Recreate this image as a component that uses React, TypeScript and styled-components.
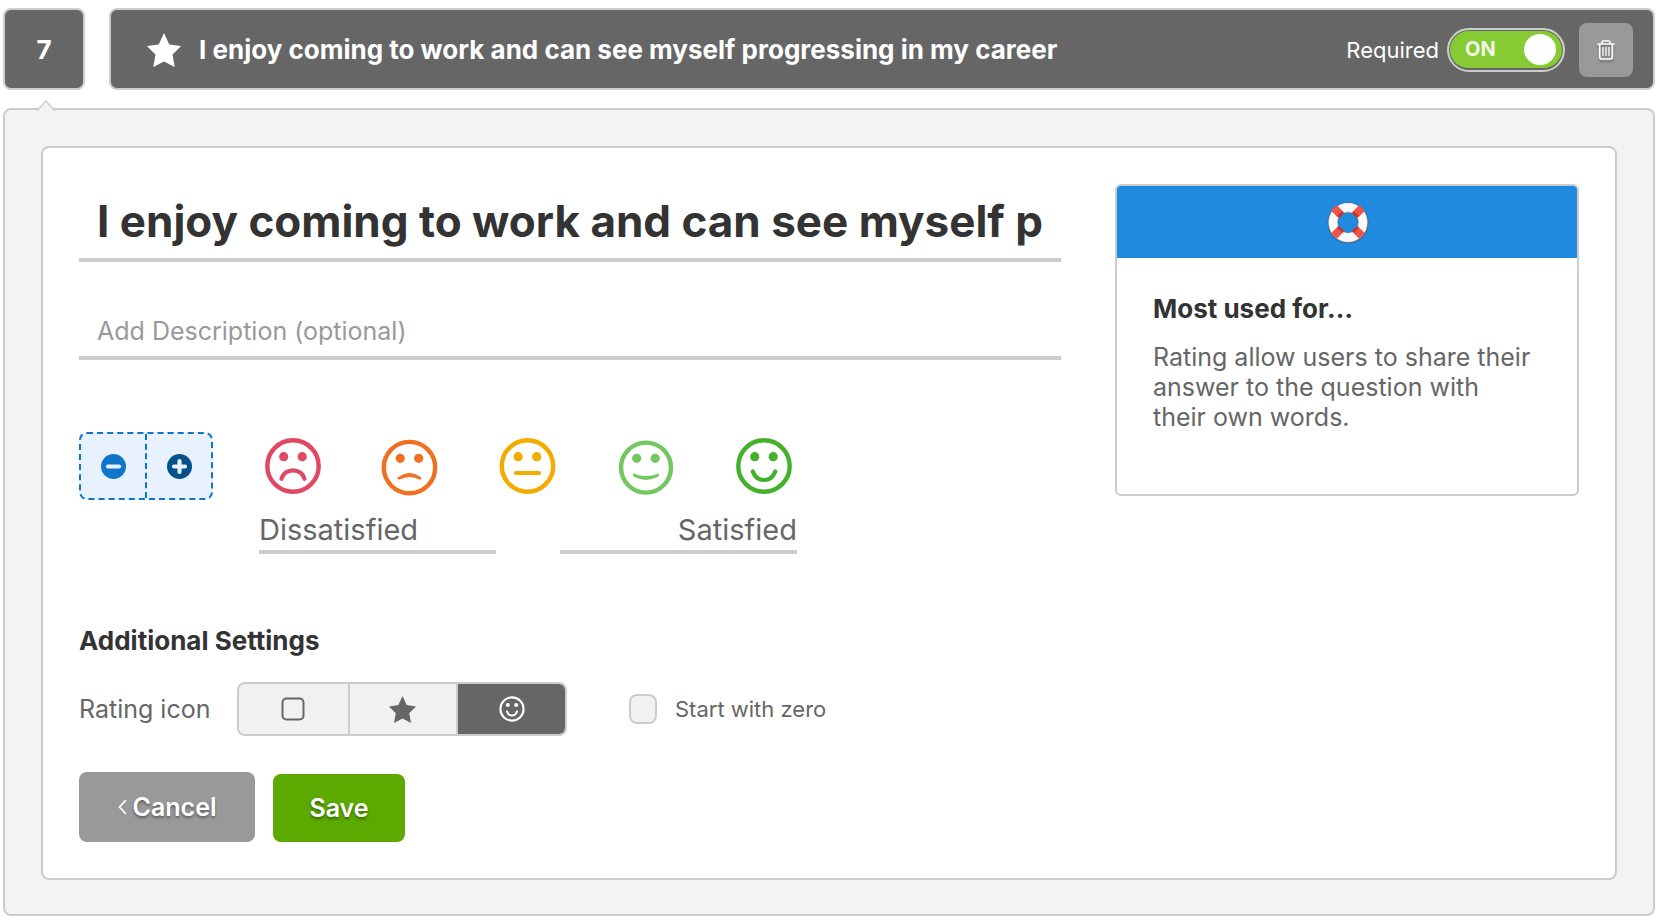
import React, { useState } from 'react';
import styled, { createGlobalStyle, css } from 'styled-components';

const GlobalStyle = createGlobalStyle`
  *, *::before, *::after { box-sizing: border-box; }
  body {
    margin: 0;
    background: #fff;
    color: #666;
    font-family: Inter, "Liberation Sans", sans-serif;
    font-size: 25px;
    line-height: 30px;
  }
  button, input { font-family: inherit; margin: 0; }
`;

const Page = styled.main`
  padding: 8px 3px 4px;
`;

const QuestionHeader = styled.header`
  display: flex;
  gap: 24px;
  margin-bottom: 18px;
`;

const darkBox = css`
  display: flex;
  align-items: center;
  height: 82px;
  padding-top: 2px;
  border: 2px solid #ccc;
  border-radius: 8px;
  background: #666;
  color: #fff;
  font-size: 26px;
  font-weight: 700;
`;

const NumberBox = styled.div`
  ${darkBox}
  flex: 0 0 82px;
  justify-content: center;
`;

const TitleBar = styled.div`
  ${darkBox}
  flex: 1;
  min-width: 0;
  padding-left: 36px;
  padding-right: 20px;
`;

const BarTitle = styled.h1`
  flex: 1;
  min-width: 0;
  margin: 0 0 0 18px;
  font-size: 26px;
  line-height: 30px;
  font-weight: 700;
  white-space: nowrap;
  overflow: hidden;
  text-overflow: ellipsis;
`;

const RequiredLabel = styled.label`
  display: flex;
  align-items: center;
  gap: 8px;
  margin-right: 14px;
  font-size: 22px;
  font-weight: 400;
`;

const Switch = styled.span`
  position: relative;
  display: flex;
  align-items: center;
  justify-content: space-between;
  width: 118px;
  height: 44px;
  padding: 0 7px 2px 16px;
  border: 2px solid #ccc;
  border-radius: 22px;
  background: #86cb34;
  box-shadow: inset 0 0 0 1px #666, inset 0 -2px 0 #666;
  color: #f1fae6;
  font-size: 20px;
  font-weight: 700;
`;

const SwitchInput = styled.input`
  position: absolute;
  inset: 0;
  width: 100%;
  height: 100%;
  opacity: 0;
`;

const Knob = styled.span`
  width: 32px;
  height: 31px;
  border-radius: 50%;
  background: #fff;
`;

const TrashButton = styled.button`
  display: flex;
  align-items: center;
  justify-content: center;
  width: 54px;
  height: 54px;
  padding: 0;
  border: 0;
  border-radius: 8px;
  background: #999;
  color: #fff;
  svg { filter: drop-shadow(0 2px 1px rgba(0, 0, 0, 0.3)); }
`;

const Panel = styled.section`
  position: relative;
  padding: 36px 36px 34px;
  border: 2px solid #ccc;
  border-radius: 8px;
  background: #f3f3f3;
`;

const Pointer = styled.svg`
  position: absolute;
  top: -10px;
  left: 31px;
`;

const Card = styled.form`
  display: grid;
  grid-template-columns: minmax(0, 1fr) 464px;
  column-gap: 54px;
  align-items: start;
  padding: 36px;
  border: 2px solid #ccc;
  border-radius: 8px;
  background: #fff;
`;

const Fields = styled.div`
  display: flex;
  flex-direction: column;
`;

const lineInput = css`
  display: block;
  width: 100%;
  border: 0;
  border-bottom: 4px solid #ccc;
  border-radius: 0;
  background: transparent;
  outline: 0;
`;

const TitleInput = styled.input`
  ${lineInput}
  height: 78px;
  padding: 0 18px;
  color: #333;
  font-size: 44px;
  font-weight: 700;
`;

const DescriptionInput = styled.input`
  ${lineInput}
  height: 60px;
  margin-top: 38px;
  padding: 6px 18px 0;
  color: #666;
  font-size: 25px;
  &::placeholder { color: #999; opacity: 1; }
`;

const RatingRow = styled.div`
  display: flex;
  align-items: flex-start;
  gap: 46px;
  margin-top: 72px;
`;

const Stepper = styled.div`
  display: flex;
  width: 134px;
  height: 68px;
  border: 2px dashed #0f75c9;
  border-radius: 8px;
  background: #e8f2ff;
`;

const StepButton = styled.button`
  display: flex;
  flex: 1;
  align-items: center;
  justify-content: center;
  padding: 0;
  border: 0;
  background: transparent;
  & + & { border-left: 2px dashed #0f75c9; }
`;

const Scale = styled.div`
  width: 538px;
`;

const Faces = styled.div`
  display: flex;
  justify-content: space-between;
  padding: 6px 5px 0 6px;
`;

const ScaleLabels = styled.div`
  display: flex;
  justify-content: space-between;
  gap: 64px;
  margin-top: 12px;
`;

const ScaleInput = styled.input<{ $align: 'left' | 'right' }>`
  ${lineInput}
  flex: 1;
  min-width: 0;
  height: 46px;
  padding: 0;
  color: #666;
  font-size: 29px;
  text-align: ${(p) => p.$align};
`;

const SectionTitle = styled.h2`
  margin: 0;
  color: #333;
  font-size: 26px;
  line-height: 30px;
  font-weight: 700;
`;

const SettingsTitle = styled(SectionTitle)`
  margin-top: 72px;
`;

const SettingsRow = styled.div`
  display: flex;
  align-items: center;
  margin-top: 26px;
`;

const SettingName = styled.span`
  width: 158px;
`;

const Segments = styled.div`
  display: grid;
  grid-template-columns: repeat(3, 1fr);
  width: 330px;
  height: 54px;
  overflow: hidden;
  border: 2px solid #ccc;
  border-radius: 8px;
  background: #f1f1f1;
`;

const Segment = styled.button<{ $active: boolean }>`
  display: flex;
  align-items: center;
  justify-content: center;
  padding: 0;
  border: 0;
  background: ${(p) => (p.$active ? '#666' : '#f1f1f1')};
  color: ${(p) => (p.$active ? '#fff' : '#666')};
  & + & { border-left: 2px solid #ccc; }
`;

const CheckLabel = styled.label`
  display: flex;
  align-items: center;
  gap: 18px;
  margin-left: 62px;
  font-size: 22px;
`;

const CheckBox = styled.input`
  appearance: none;
  width: 28px;
  height: 30px;
  border: 2px solid #ccc;
  border-radius: 8px;
  background: #f1f1f1;
  &:checked { background: #666; }
`;

const Actions = styled.div`
  display: flex;
  align-items: flex-end;
  gap: 18px;
  margin-top: 36px;
`;

const ActionButton = styled.button<{ $primary?: boolean }>`
  display: flex;
  align-items: center;
  justify-content: center;
  gap: 6px;
  width: ${(p) => (p.$primary ? 132 : 176)}px;
  height: ${(p) => (p.$primary ? 68 : 70)}px;
  padding: 0;
  border: 0;
  border-radius: 8px;
  background: ${(p) => (p.$primary ? '#5caa00' : '#999')};
  color: #fff;
  font-size: 25px;
  font-weight: 600;
  text-shadow: 0 2px 3px rgba(0, 0, 0, 0.4);
`;

const HelpBox = styled.aside`
  min-height: 312px;
  overflow: hidden;
  border: 2px solid #ccc;
  border-radius: 6px;
`;

const HelpBanner = styled.div`
  display: flex;
  align-items: center;
  justify-content: center;
  height: 72px;
  padding: 2px 0 0 2px;
  background: #208ade;
`;

const HelpBody = styled.div`
  padding: 36px 40px 36px 36px;
`;

const HelpText = styled.p`
  margin: 18px 0 0;
`;

const starPath =
  'M50 0 L65.5 33.5 L100 38.5 L75 63.5 L81.5 100 L50 83.5 L18.5 100 L25 63.5 L0 38.5 L34.5 33.5 Z';

const Star = ({ size }: { size: number }) => (
  <svg width={size} height={size} viewBox="0 0 100 100" fill="currentColor" aria-hidden="true">
    <path d={starPath} />
  </svg>
);

const Trash = () => (
  <svg width="18" height="20" viewBox="0 0 18 20" fill="none" stroke="currentColor" strokeWidth="1.7" strokeLinecap="round" aria-hidden="true">
    <path d="M1 4H17M5 4V2.6Q5 1 6.6 1H11.4Q13 1 13 2.6V4M2.7 4V17Q2.7 19 4.7 19H13.3Q15.3 19 15.3 17V4" />
    <path d="M6 7.5V15.5M9 7.5V15.5M12 7.5V15.5" strokeWidth="1.3" />
  </svg>
);

const mouths = [
  'M16.5 40.8C18 35.5 22.5 32.3 28 32.3S38 35.5 39.5 40.8',
  'M16.5 38.2Q28 29.5 39.5 38.2Q40 39.8 38 39.5Q28 34.5 18 39.5Q16 39.8 16.5 38.2Z',
  'M16.5 35H39.5',
  'M15.5 34.5Q28 39.5 40.5 34.5Q41 36 39.5 37Q28 42.5 16.5 37Q15 36 15.5 34.5Z',
  'M16.8 33.5C19 39.5 23 42 28 42S37 39.5 39.2 33.5',
];
const shifts = ['0 0', '-1.5 1.6', '-1.5 0', '0 1.6', '0 0'];
const faceColors = ['#e04864', '#f16f21', '#f4ab00', '#73c760', '#43b12a'];
const faceNames = ['Very dissatisfied', 'Dissatisfied', 'Neutral', 'Satisfied', 'Very satisfied'];

const Face = ({ level }: { level: number }) => {
  const color = faceColors[level];
  const thin = level === 1 || level === 3;
  return (
    <svg width="56" height="58" viewBox="0 0 56 58" overflow="visible" role="img" aria-label={faceNames[level]}>
      <g transform={`translate(${shifts[level]})`} fill="none" stroke={color}>
        <circle cx="28" cy="28" r={level === 3 ? 25 : 25.7} strokeWidth="4.4" />
        <circle cx="18.7" cy="18.7" r="4.6" fill={color} stroke="none" />
        <circle cx="37.2" cy="18.7" r="4.6" fill={color} stroke="none" />
        <path
          d={mouths[level]}
          strokeWidth={thin ? 1 : 4.2}
          fill={thin ? color : 'none'}
          strokeLinecap="round"
          strokeLinejoin="round"
        />
      </g>
    </svg>
  );
};

const StepIcon = ({ plus }: { plus?: boolean }) => (
  <svg width="25" height="25" viewBox="0 0 25 25" aria-hidden="true">
    <circle cx="12.5" cy="12.5" r="12.5" fill={plus ? '#05518c' : '#0f75c9'} />
    <path
      d={plus ? 'M7 12.5H18M12.5 7V18' : 'M7 12.5H18'}
      stroke="#e8f2ff"
      strokeWidth="4.2"
      strokeLinecap="round"
    />
  </svg>
);

const SquareIcon = () => (
  <svg width="24" height="24" viewBox="0 0 24 24" fill="none" stroke="currentColor" strokeWidth="2" aria-hidden="true">
    <rect x="1.5" y="1.5" width="21" height="21" rx="4" />
  </svg>
);

const SmileIcon = () => (
  <svg width="26" height="26" viewBox="0 0 26 26" fill="none" stroke="currentColor" strokeWidth="2.1" strokeLinecap="round" aria-hidden="true">
    <circle cx="13" cy="13" r="11.6" />
    <circle cx="8.8" cy="9" r="2" fill="currentColor" stroke="none" />
    <circle cx="17.2" cy="9" r="2" fill="currentColor" stroke="none" />
    <path d="M8 15.5C9 18.5 11 19.5 13 19.5S17 18.5 18 15.5" />
  </svg>
);

const LifeRing = () => (
  <svg width="42" height="44" viewBox="0 0 42 44" fill="none" aria-hidden="true">
    <circle cx="21" cy="22" r="15.3" stroke="#46668c" strokeWidth="10.6" />
    <circle cx="21" cy="21.6" r="15" stroke="#d5d8dd" strokeWidth="9.2" />
    <circle cx="21" cy="21.2" r="15" stroke="#fafafa" strokeWidth="8" />
    <g stroke="#ee564c" strokeWidth="8">
      <path d="M14 14L6.8 6.8M28 14L35.2 6.8M14 28L6.8 35.2M28 28L35.2 35.2" />
    </g>
    <g stroke="#c93336" strokeWidth="7">
      <path d="M14.6 14.6L12.6 12.6M27.4 14.6L29.4 12.6M14.6 27.4L12.6 29.4M27.4 27.4L29.4 29.4" />
    </g>
  </svg>
);

const Chevron = () => (
  <svg width="9" height="16" viewBox="0 0 9 16" fill="none" stroke="currentColor" strokeWidth="1.8" aria-hidden="true">
    <path d="M8 1L1.5 8L8 15" />
  </svg>
);

const question = 'I enjoy coming to work and can see myself progressing in my career';

const ratingIcons = [
  { name: 'Square', icon: <SquareIcon /> },
  { name: 'Star', icon: <Star size={27} /> },
  { name: 'Smiley', icon: <SmileIcon /> },
];

export default function App() {
  const [title, setTitle] = useState(question);
  const [icon, setIcon] = useState('Smiley');

  return (
    <>
      <GlobalStyle />
      <Page>
        <QuestionHeader>
          <NumberBox>7</NumberBox>
          <TitleBar>
            <Star size={34} />
            <BarTitle>{title}</BarTitle>
            <RequiredLabel>
              Required
              <Switch>
                <SwitchInput type="checkbox" role="switch" defaultChecked />
                ON
                <Knob />
              </Switch>
            </RequiredLabel>
            <TrashButton type="button" aria-label="Delete question">
              <Trash />
            </TrashButton>
          </TitleBar>
        </QuestionHeader>

        <Panel>
          <Pointer width="20" height="11" viewBox="0 0 20 11" aria-hidden="true">
            <path d="M1 11L10 1L19 11" fill="#f3f3f3" stroke="#ccc" strokeWidth="1.4" />
          </Pointer>
          <Card onSubmit={(e) => e.preventDefault()}>
            <Fields>
              <TitleInput aria-label="Question" value={title} onChange={(e) => setTitle(e.target.value)} />
              <DescriptionInput aria-label="Description" placeholder="Add Description (optional)" />

              <RatingRow>
                <Stepper>
                  <StepButton type="button" aria-label="Fewer options">
                    <StepIcon />
                  </StepButton>
                  <StepButton type="button" aria-label="More options">
                    <StepIcon plus />
                  </StepButton>
                </Stepper>
                <Scale>
                  <Faces>
                    {faceNames.map((name, level) => (
                      <Face key={name} level={level} />
                    ))}
                  </Faces>
                  <ScaleLabels>
                    <ScaleInput $align="left" aria-label="Lowest label" defaultValue="Dissatisfied" />
                    <ScaleInput $align="right" aria-label="Highest label" defaultValue="Satisfied" />
                  </ScaleLabels>
                </Scale>
              </RatingRow>

              <SettingsTitle>Additional Settings</SettingsTitle>
              <SettingsRow>
                <SettingName id="rating-icon">Rating icon</SettingName>
                <Segments role="group" aria-labelledby="rating-icon">
                  {ratingIcons.map((item) => (
                    <Segment
                      key={item.name}
                      type="button"
                      aria-label={item.name}
                      aria-pressed={icon === item.name}
                      $active={icon === item.name}
                      onClick={() => setIcon(item.name)}
                    >
                      {item.icon}
                    </Segment>
                  ))}
                </Segments>
                <CheckLabel>
                  <CheckBox type="checkbox" />
                  Start with zero
                </CheckLabel>
              </SettingsRow>

              <Actions>
                <ActionButton type="button">
                  <Chevron />
                  Cancel
                </ActionButton>
                <ActionButton type="submit" $primary>
                  Save
                </ActionButton>
              </Actions>
            </Fields>

            <HelpBox>
              <HelpBanner>
                <LifeRing />
              </HelpBanner>
              <HelpBody>
                <SectionTitle>Most used for…</SectionTitle>
                <HelpText>Rating allow users to share their answer to the question with their own words.</HelpText>
              </HelpBody>
            </HelpBox>
          </Card>
        </Panel>
      </Page>
    </>
  );
}
